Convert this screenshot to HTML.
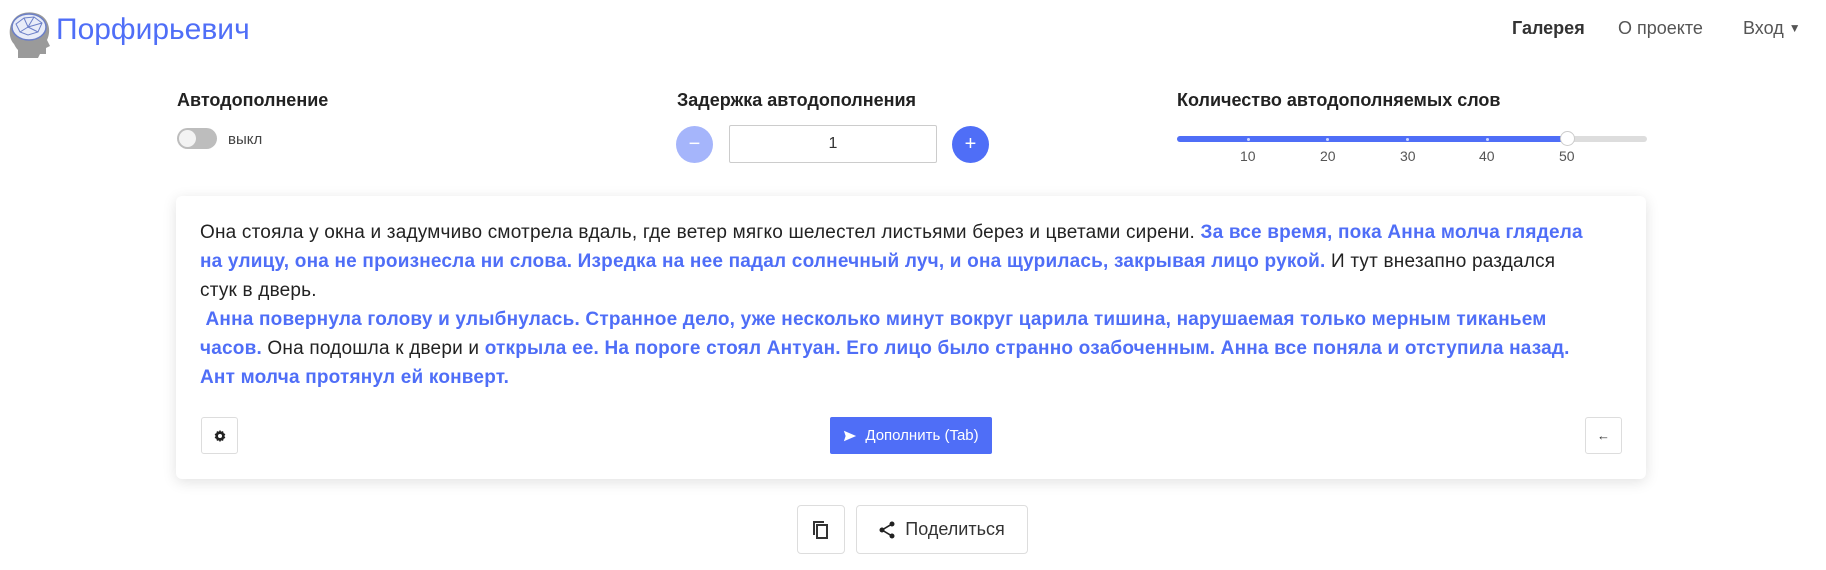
<!DOCTYPE html>
<html><head><meta charset="utf-8">
<style>
*{box-sizing:border-box;margin:0;padding:0}
body{width:1826px;height:570px;background:#fff;font-family:"Liberation Sans",sans-serif;color:#212529;position:relative;overflow:hidden}
.abs{position:absolute}
.logo{left:56px;top:13px;font-size:30px;color:#4f6ef7}
.nav{top:18px;font-size:18px;color:#555}
.lbl{top:90px;font-size:18px;font-weight:bold;color:#222}
.card{left:176px;top:196px;width:1470px;height:283px;background:#fff;border-radius:6px;box-shadow:0 3px 14px rgba(0,0,0,.12)}
.txt{left:200px;top:218px;width:1440px;font-size:19px;letter-spacing:0.2px;line-height:29px;color:#222;white-space:nowrap}
.txt b{color:#4f6ef7}
.btn{border:1px solid #ddd;border-radius:3px;background:#fff;display:flex;align-items:center;justify-content:center}
</style></head><body>
<svg class="abs" style="left:4px;top:8px" width="50" height="50" viewBox="0 0 50 50">
<path d="M10 36 C4 30 4 16 12 9 C20 2 36 3 42 12 C47 20 45 28 43 32 L46 38 L42 40 L42 46 L36 46 L34 50 L14 50 L14 42 C12 40 11 38 10 36Z" fill="#9a9a9a"/>
<ellipse cx="25" cy="19" rx="17" ry="13" fill="#e8ecf8" stroke="#6b7fc8" stroke-width="1.5"/>
<path d="M12 16 L20 10 L30 9 L38 15 L34 24 L24 27 L16 24 Z M20 10 L24 19 L30 9 M24 19 L38 15 M24 19 L16 24 M24 19 L34 24" fill="none" stroke="#6b7fc8" stroke-width="1"/>
</svg>
<div class="abs logo">Порфирьевич</div>
<div class="abs nav" style="left:1512px;font-weight:bold;color:#333">Галерея</div>
<div class="abs nav" style="left:1618px">О проекте</div>
<div class="abs nav" style="left:1743px">Вход <span style="font-size:12px;position:relative;top:-2px">▼</span></div>

<div class="abs lbl" style="left:177px">Автодополнение</div>
<div class="abs" style="left:177px;top:128px;width:40px;height:21px;border-radius:11px;background:#bdbdbd"><div style="position:absolute;left:2px;top:2px;width:17px;height:17px;border-radius:50%;background:#f3f3f3"></div></div>
<div class="abs" style="left:228px;top:131px;font-size:15px;color:#444">выкл</div>

<div class="abs lbl" style="left:677px">Задержка автодополнения</div>
<div class="abs" style="left:676px;top:126px;width:37px;height:37px;border-radius:50%;background:#a5b5fb;color:#fff;text-align:center;line-height:36px;font-size:20px">−</div>
<div class="abs" style="left:729px;top:125px;width:208px;height:38px;border:1px solid #ccc;border-radius:2px;text-align:center;line-height:36px;font-size:16px;color:#333">1</div>
<div class="abs" style="left:952px;top:126px;width:37px;height:37px;border-radius:50%;background:#4f6ef7;color:#fff;text-align:center;line-height:36px;font-size:20px">+</div>

<div class="abs lbl" style="left:1177px">Количество автодополняемых слов</div>
<div class="abs" style="left:1177px;top:136px;width:470px;height:6px;border-radius:3px;background:#ddd"></div>
<div class="abs" style="left:1177px;top:136px;width:390px;height:6px;border-radius:3px;background:#4f6ef7"></div>
<div class="abs" style="left:1247px;top:138px;width:3px;height:3px;background:#cfd8ff;border-radius:50%"></div>
<div class="abs" style="left:1326px;top:138px;width:3px;height:3px;background:#cfd8ff;border-radius:50%"></div>
<div class="abs" style="left:1406px;top:138px;width:3px;height:3px;background:#cfd8ff;border-radius:50%"></div>
<div class="abs" style="left:1486px;top:138px;width:3px;height:3px;background:#cfd8ff;border-radius:50%"></div>
<div class="abs" style="left:1560px;top:131px;width:15px;height:15px;border-radius:50%;background:#fff;border:1px solid #ccc"></div>
<div class="abs" style="top:148px;font-size:14px;color:#555;left:1240px">10</div>
<div class="abs" style="top:148px;font-size:14px;color:#555;left:1320px">20</div>
<div class="abs" style="top:148px;font-size:14px;color:#555;left:1400px">30</div>
<div class="abs" style="top:148px;font-size:14px;color:#555;left:1479px">40</div>
<div class="abs" style="top:148px;font-size:14px;color:#555;left:1559px">50</div>

<div class="abs card"></div>
<div class="abs txt">Она стояла у окна и задумчиво смотрела вдаль, где ветер мягко шелестел листьями берез и цветами сирени. <b>За все время, пока Анна молча глядела</b><br><b>на улицу, она не произнесла ни слова. Изредка на нее падал солнечный луч, и она щурилась, закрывая лицо рукой.</b> И тут внезапно раздался<br>стук в дверь.<br><b>&nbsp;Анна повернула голову и улыбнулась. Странное дело, уже несколько минут вокруг царила тишина, нарушаемая только мерным тиканьем</b><br><b>часов.</b> Она подошла к двери и <b>открыла ее. На пороге стоял Антуан. Его лицо было странно озабоченным. Анна все поняла и отступила назад.</b><br><b>Ант молча протянул ей конверт.</b></div>

<div class="abs btn" style="left:201px;top:417px;width:37px;height:37px"><svg width="14" height="14" viewBox="0 0 16 16"><path d="M8 1l1.2 2 2.3-.6.6 2.3 2 1.2-1.1 2.1 1.1 2.1-2 1.2-.6 2.3-2.3-.6L8 15l-1.2-2-2.3.6-.6-2.3-2-1.2L3 8 1.9 5.9l2-1.2.6-2.3 2.3.6z" fill="#222"/><circle cx="8" cy="8" r="2.3" fill="#fff"/></svg></div>
<div class="abs" style="left:830px;top:417px;width:162px;height:37px;background:#4f6ef7;border-radius:2px;color:#fff;font-size:15px;display:flex;align-items:center;justify-content:center;gap:8px"><svg width="14" height="14" viewBox="0 0 16 16"><path d="M1 2l14 6-14 6 2-6z" fill="#fff"/></svg>Дополнить (Tab)</div>
<div class="abs btn" style="left:1585px;top:417px;width:37px;height:37px;font-size:13px;color:#333">←</div>

<div class="abs btn" style="left:797px;top:505px;width:48px;height:49px;border-radius:4px"><svg width="18" height="20" viewBox="0 0 18 20"><rect x="5" y="5" width="10" height="13" fill="none" stroke="#333" stroke-width="2"/><path d="M2 15V2h10" fill="none" stroke="#333" stroke-width="2"/></svg></div>
<div class="abs btn" style="left:856px;top:505px;width:172px;height:49px;border-radius:4px;font-size:18px;color:#333;gap:10px"><svg width="16" height="18" viewBox="0 0 16 18"><circle cx="13" cy="3" r="2.5" fill="#222"/><circle cx="3" cy="9" r="2.5" fill="#222"/><circle cx="13" cy="15" r="2.5" fill="#222"/><path d="M13 3L3 9l10 6" fill="none" stroke="#222" stroke-width="1.6"/></svg>Поделиться</div>
</body></html>
